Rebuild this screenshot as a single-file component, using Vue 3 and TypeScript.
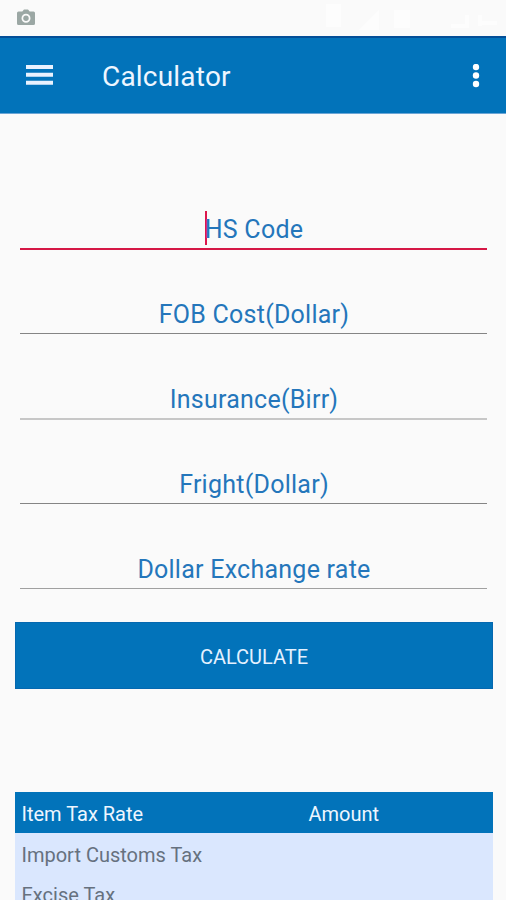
<script setup lang="ts">
interface Field {
  id: string
  label: string
  tone: 'active' | 'dark' | 'light' | 'mid'
}

const fields: Field[] = [
  { id: 'hs', label: 'HS Code', tone: 'active' },
  { id: 'fob', label: 'FOB Cost(Dollar)', tone: 'dark' },
  { id: 'insurance', label: 'Insurance(Birr)', tone: 'light' },
  { id: 'fright', label: 'Fright(Dollar)', tone: 'dark' },
  { id: 'rate', label: 'Dollar Exchange rate', tone: 'mid' },
]

const rows: string[] = ['Import Customs Tax', 'Excise Tax']
</script>

<template>
  <div class="screen">
    <div class="status">
      <svg class="camera" viewBox="0 0 18 17" aria-hidden="true">
        <path fill-rule="evenodd" d="M1.500 2.500h3.800L7 .5h4l1.700 2h3.800A1.500 1.500 0 0 1 18 4v10.500a1.500 1.500 0 0 1-1.500 1.500h-15A1.500 1.500 0 0 1 0 14.500V4a1.500 1.500 0 0 1 1.500-1.500ZM9 4.700a4.500 4.500 0 1 0 0 9a4.500 4.500 0 0 0 0-9Z" />
        <circle cx="9" cy="9.200" r="2.700" />
      </svg>
      <svg class="signals" viewBox="0 0 178 30" aria-hidden="true">
        <path d="M3 3h15v23H3zM36 29l20-20v20zM71 9h16v18H71zM128 23h14v4h-14zM142 14h4v13h-4zM155 14h4v11h-4zM159 20h15v4h-15z" />
      </svg>
    </div>
    <header class="appbar">
      <svg class="menu" viewBox="0 0 27 21" aria-hidden="true">
        <path d="M0 0h27v4H0zM0 7.800h27v4H0zM0 15.700h27v4H0z" />
      </svg>
      <h1 class="title">Calculator</h1>
      <svg class="more" viewBox="0 0 8 24" aria-hidden="true">
        <circle cx="4" cy="3" r="3.200" />
        <circle cx="4" cy="11.500" r="3.200" />
        <circle cx="4" cy="20" r="3.200" />
      </svg>
    </header>
    <main class="content">
      <div v-for="f in fields" :key="f.id" class="field" :class="f.tone">
        <span class="hint"><i v-if="f.tone === 'active'" class="caret"></i>{{ f.label }}</span>
      </div>
      <button class="calculate" type="button">CALCULATE</button>
      <section class="table">
        <div class="row head">
          <span class="item">Item Tax Rate</span>
          <span class="amount">Amount</span>
        </div>
        <div v-for="r in rows" :key="r" class="row">
          <span class="item">{{ r }}</span>
        </div>
      </section>
    </main>
  </div>
</template>

<style>
body {
  background: #fafafa;
}
</style>

<style scoped>
.screen {
  box-sizing: border-box;
  height: 900px;
  overflow: hidden;
  background: #fafafa;
  font-family: Roboto, sans-serif;
}
.status {
  box-sizing: border-box;
  height: 36px;
  padding: 0 5px 0 17px;
  display: flex;
  align-items: flex-start;
  justify-content: space-between;
}
.camera {
  width: 18px;
  height: 17px;
  margin-top: 9px;
  fill: #9ba7a4;
}
.signals {
  width: 178px;
  height: 30px;
  margin-top: 1px;
  fill: #fdfdfd;
}
.appbar {
  box-sizing: border-box;
  height: 78px;
  padding: 0 26px;
  display: flex;
  align-items: center;
  background: #0273ba;
  border-top: 2px solid #034f98;
  border-bottom: 1px solid #6ba5d5;
}
.menu {
  width: 27px;
  height: 21px;
  fill: #e9f2ff;
}
.title {
  margin: 3px 0 0 49px;
  font-size: 28px;
  font-weight: 400;
  line-height: 36px;
  letter-spacing: 0.2px;
  color: #eef6ff;
}
.more {
  width: 8px;
  height: 24px;
  margin-left: auto;
  fill: #fff;
}
.content {
  padding: 50px 13.500px 0 14.500px;
}
.field {
  box-sizing: border-box;
  height: 85px;
  margin: 0 5.500px;
  padding-bottom: 1px;
  display: flex;
  align-items: flex-end;
  justify-content: center;
  border-bottom: 1px solid #858585;
  color: #2476bb;
}
.field.active {
  height: 86px;
  border-bottom: 2px solid #d51745;
}
.field.dark {
  height: 84px;
}
.field.light {
  height: 86px;
  border-bottom: 2px solid #c7c7c7;
}
.field.mid {
  border-bottom-color: #a0a0a0;
}
.hint {
  display: flex;
  align-items: center;
  padding-left: 1px;
  font-size: 25px;
  line-height: 34px;
  letter-spacing: 0.25px;
}
.caret {
  width: 2px;
  height: 34px;
  margin: -4px -2px 0 0;
  background: #dc174c;
}
.calculate {
  display: block;
  width: 100%;
  height: 67px;
  margin-top: 33px;
  padding: 2px 0 0 1px;
  border: 1px solid #0568b0;
  background: #0273ba;
  color: #e4f1ff;
  font-family: inherit;
  font-size: 20px;
  line-height: 24px;
}
.table {
  margin-top: 103px;
}
.row {
  display: flex;
  height: 40px;
  box-sizing: border-box;
  padding: 3px 7px 0;
  align-items: center;
  background: #dae7fe;
  color: #66717f;
  font-size: 20px;
}
.row.head {
  height: 41px;
  background: #0273ba;
  color: #eef6ff;
}
.item {
  width: 287px;
}
</style>
